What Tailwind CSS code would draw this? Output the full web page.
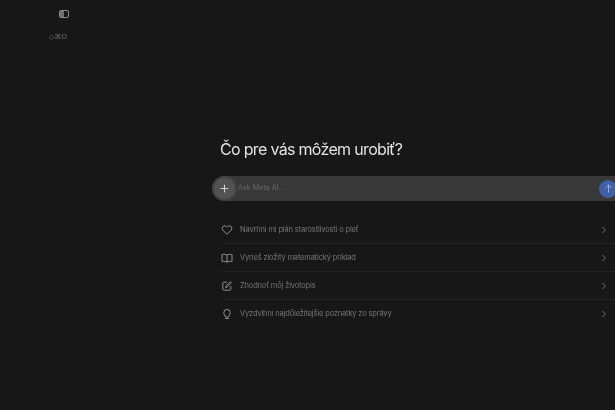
<!DOCTYPE html>
<html lang="sk">
<head>
    <meta charset="UTF-8">
    <meta name="viewport" content="width=device-width, initial-scale=1.0">
    <title>Meta AI</title>
    <script src="https://cdn.jsdelivr.net/npm/@tailwindcss/browser@4"></script>
</head>
<body class="h-[410px] w-[615px] overflow-hidden bg-[#171717] font-['Inter',sans-serif] flex">
    <!-- Sidebar -->
    <aside class="w-[212px] shrink-0 flex flex-col items-start pl-[49px] pt-[10px]">
        <div class="ml-[10px] w-[10px] h-[8px] border border-[#8a8a8a] rounded-[2px] flex blur-[0.3px]">
            <span class="w-[4px] bg-[#707070]"></span>
        </div>
        <div class="mt-[15px] text-[7px] leading-[9px] text-[#6a6a6a] font-['DejaVu_Sans',sans-serif] blur-[0.3px]">◇⌘O</div>
    </aside>

    <!-- Main -->
    <main class="flex-1 flex flex-col pt-[139px] min-w-0">
        <h1 class="ml-[8px] text-[16px] leading-[20px] tracking-[-0.68px] text-[#e2e2e2] blur-[0.3px]">Čo pre vás môžem urobiť?</h1>

        <div class="mt-[17px] h-[25px] bg-[#383838] rounded-l-full flex items-center relative">
            <span class="w-[21px] h-[21px] ml-[2px] rounded-full bg-[#525252] flex items-center justify-center shrink-0 ring-2 ring-[#444]">
                <svg width="9" height="9" viewBox="0 0 9 9" fill="none" stroke="#cfcfcf" stroke-width="1.1" stroke-linecap="round"><path d="M4.5 1v7M1 4.5h7"/></svg>
            </span>
            <span class="ml-[3px] text-[7.2px] text-[#696969] blur-[0.3px]">Ask Meta AI...</span>
            <span class="absolute right-[-2px] w-[18px] h-[18px] rounded-full bg-[#3f60a8] flex items-center justify-center">
                <svg width="9" height="9" viewBox="0 0 9 9" fill="none" stroke="#9eb2dc" stroke-width="1" stroke-linecap="round" stroke-linejoin="round"><path d="M4.5 8V1M1.8 3.7 4.5 1l2.7 2.7"/></svg>
            </span>
        </div>

        <ul class="mt-[15px] ml-[8px] text-[7.5px] tracking-[-0.16px] text-[#767676]">
            <li class="h-[28px] flex items-center gap-[7px] border-b border-[#222]">
                <svg class="shrink-0 ml-[1px]" width="12" height="12" viewBox="0 0 12 12" fill="none" stroke="#909090" stroke-width="1" stroke-linejoin="round"><path d="M6 10.3 1.9 6.2a2.6 2.6 0 0 1 0-3.6 2.5 2.5 0 0 1 3.6 0l.5.5.5-.5a2.5 2.5 0 0 1 3.6 0 2.6 2.6 0 0 1 0 3.6z"/></svg>
                <span class="flex-1 blur-[0.3px]">Navrhni mi plán starostlivosti o pleť</span>
                <svg class="mr-[8px]" width="6" height="8" viewBox="0 0 6 8" fill="none" stroke="#6f6f6f" stroke-width="1"><path d="M1.5 1 4.5 4l-3 3"/></svg>
            </li>
            <li class="h-[28px] flex items-center gap-[7px] border-b border-[#222]">
                <svg class="shrink-0 ml-[1px]" width="12" height="12" viewBox="0 0 12 12" fill="none" stroke="#909090" stroke-width="1" stroke-linejoin="round"><path d="M6 3.2C5 2.4 3 2.2 1 2.4v7c2-.2 4 0 5 .8 1-.8 3-1 5-.8v-7c-2-.2-4 0-5 .8zM6 3.2v7"/></svg>
                <span class="flex-1 blur-[0.3px]">Vyrieš zložitý matematický príklad</span>
                <svg class="mr-[8px]" width="6" height="8" viewBox="0 0 6 8" fill="none" stroke="#6f6f6f" stroke-width="1"><path d="M1.5 1 4.5 4l-3 3"/></svg>
            </li>
            <li class="h-[28px] flex items-center gap-[7px] border-b border-[#222]">
                <svg class="shrink-0 ml-[1px]" width="12" height="12" viewBox="0 0 12 12" fill="none" stroke="#909090" stroke-width="1" stroke-linecap="round" stroke-linejoin="round"><path d="M9.8 6.5v2.7a1 1 0 0 1-1 1H2.8a1 1 0 0 1-1-1V3.2a1 1 0 0 1 1-1h2.8M4.8 7.2l.4-1.6 4-3.9 1.2 1.2-4 3.9z"/></svg>
                <span class="flex-1 blur-[0.3px]">Zhodnoť môj životopis</span>
                <svg class="mr-[8px]" width="6" height="8" viewBox="0 0 6 8" fill="none" stroke="#6f6f6f" stroke-width="1"><path d="M1.5 1 4.5 4l-3 3"/></svg>
            </li>
            <li class="h-[28px] flex items-center gap-[7px]">
                <svg class="shrink-0 ml-[1px]" width="12" height="12" viewBox="0 0 12 12" fill="none" stroke="#909090" stroke-width="1" stroke-linecap="round" stroke-linejoin="round"><path d="M4.4 8.6C4.2 7.6 2.8 6.9 2.8 4.6a3.2 3.2 0 0 1 6.4 0c0 2.3-1.4 3-1.6 4zM4.6 10.5h2.8"/></svg>
                <span class="flex-1 blur-[0.3px]">Vyzdvihni najdôležitejšie poznatky zo správy</span>
                <svg class="mr-[8px]" width="6" height="8" viewBox="0 0 6 8" fill="none" stroke="#6f6f6f" stroke-width="1"><path d="M1.5 1 4.5 4l-3 3"/></svg>
            </li>
        </ul>
    </main>
</body>
</html>
